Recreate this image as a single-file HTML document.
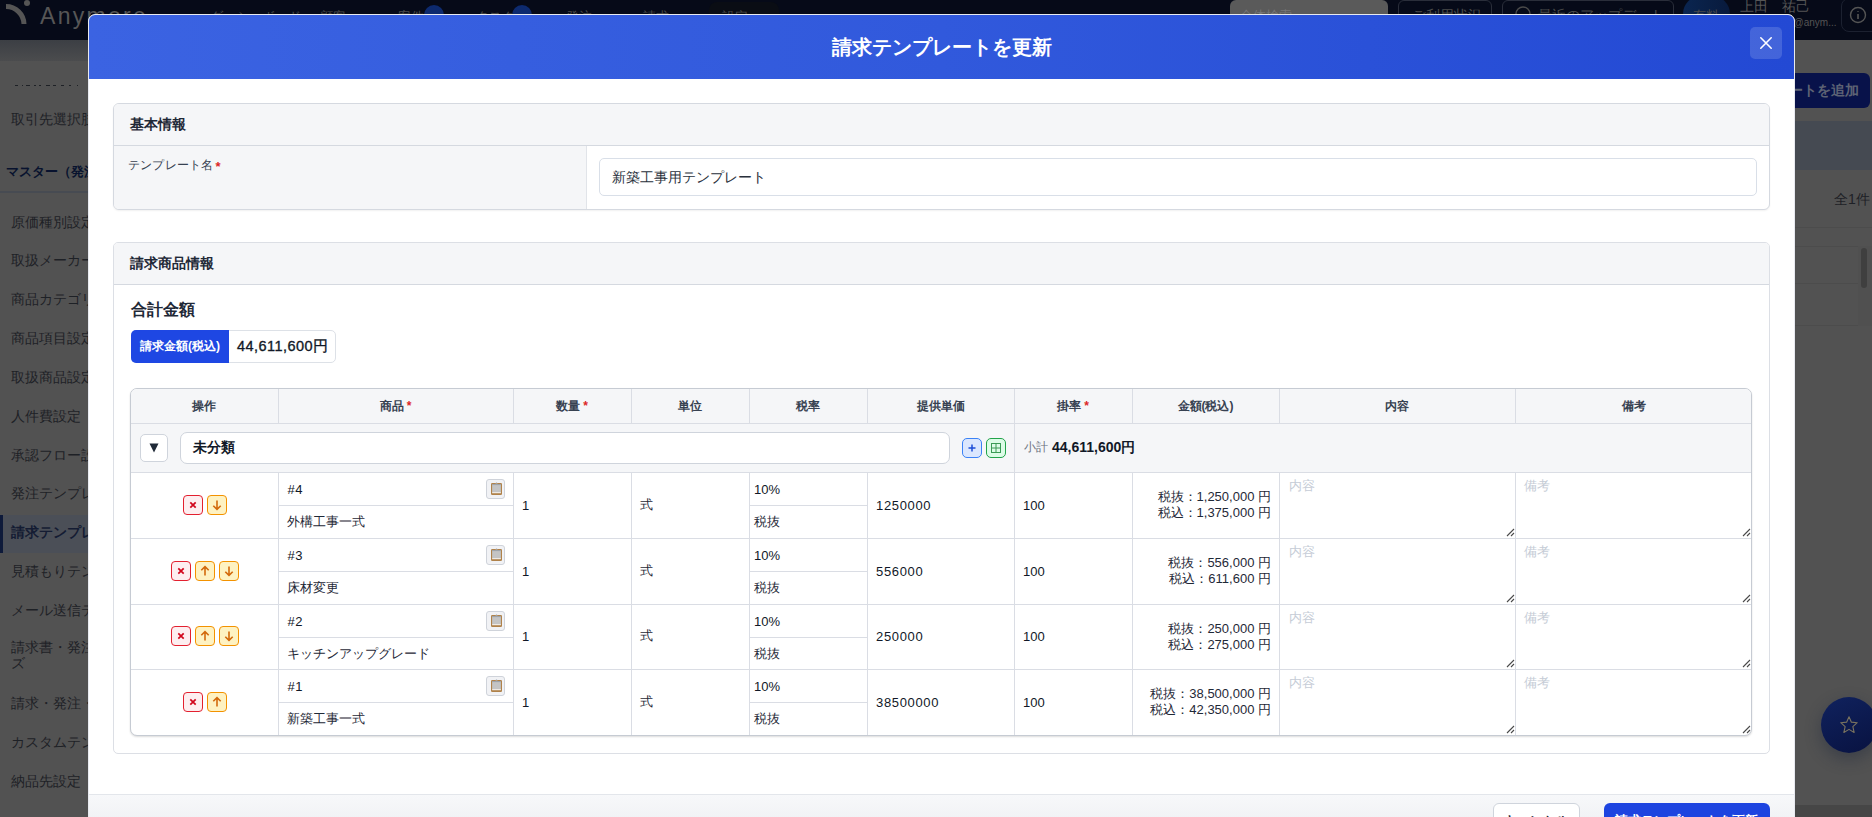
<!DOCTYPE html><html lang="ja"><head><meta charset="utf-8"><title>請求テンプレートを更新</title><style>
html,body{margin:0;padding:0;} body{width:1872px;height:817px;overflow:hidden;position:relative;background:#525252;font-family:"Liberation Sans", sans-serif;}
div{box-sizing:border-box;}
</style></head><body>
<div style="position:absolute;left:0px;top:0px;width:1872px;height:40px;background:#060a18;"></div>
<svg style="position:absolute;left:0;top:0" width="40" height="40" viewBox="0 0 40 40"><path d="M6 6.5 A 18 18 0 0 1 24 24" stroke="#555" stroke-width="5" fill="none"/><circle cx="27" cy="3" r="3" fill="#555"/></svg>
<div style="position:absolute;left:40px;top:1.5px;font-size:23px;line-height:29px;color:#565656;font-weight:normal;white-space:nowrap;letter-spacing:2.3px;">Anymore</div>
<div style="position:absolute;left:210px;top:6.5px;font-size:13px;line-height:19px;color:#4a4a4a;font-weight:normal;white-space:nowrap;">ダッシュボード</div>
<div style="position:absolute;left:320px;top:6.5px;font-size:13px;line-height:19px;color:#4a4a4a;font-weight:normal;white-space:nowrap;">顧客</div>
<div style="position:absolute;left:398px;top:6.5px;font-size:13px;line-height:19px;color:#4a4a4a;font-weight:normal;white-space:nowrap;">案件</div>
<div style="position:absolute;left:476px;top:6.5px;font-size:13px;line-height:19px;color:#4a4a4a;font-weight:normal;white-space:nowrap;">タスク</div>
<div style="position:absolute;left:566px;top:6.5px;font-size:13px;line-height:19px;color:#4a4a4a;font-weight:normal;white-space:nowrap;">発注</div>
<div style="position:absolute;left:643px;top:6.5px;font-size:13px;line-height:19px;color:#4a4a4a;font-weight:normal;white-space:nowrap;">請求</div>
<div style="position:absolute;left:722px;top:6.5px;font-size:13px;line-height:19px;color:#4a4a4a;font-weight:normal;white-space:nowrap;">設定</div>
<div style="position:absolute;left:424px;top:5px;width:20px;height:20px;background:#0d2a6e;border-radius:50%;"></div>
<div style="position:absolute;left:512px;top:5px;width:20px;height:20px;background:#0d2a6e;border-radius:50%;"></div>
<div style="position:absolute;left:709px;top:2px;width:70px;height:30px;background:#0a0d14;border-radius:8px;"></div>
<div style="position:absolute;left:722px;top:6.5px;font-size:13px;line-height:19px;color:#4a4a4a;font-weight:normal;white-space:nowrap;">設定</div>
<div style="position:absolute;left:1230px;top:0px;width:158px;height:32px;background:#5a5a5a;border-radius:6px;"></div>
<div style="position:absolute;left:1240px;top:5.5px;font-size:13px;line-height:19px;color:#777;font-weight:normal;white-space:nowrap;">全体検索</div>
<div style="position:absolute;left:1398px;top:0px;width:94px;height:32px;border:1px solid #2a2e3a;border-radius:6px;"></div>
<div style="position:absolute;left:1412px;top:5.0px;font-size:14px;line-height:20px;color:#4a4a4a;font-weight:normal;white-space:nowrap;">ご利用状況</div>
<div style="position:absolute;left:1502px;top:0px;width:172px;height:32px;border:1px solid #2a2e3a;border-radius:6px;"></div>
<div style="position:absolute;left:1538px;top:5.0px;font-size:14px;line-height:20px;color:#4a4a4a;font-weight:normal;white-space:nowrap;">最近のアップデート</div>
<svg style="position:absolute;left:1514px;top:5px" width="18" height="18" viewBox="0 0 18 18"><circle cx="9" cy="9" r="7" fill="none" stroke="#4a4a4a" stroke-width="1.4"/></svg>
<div style="position:absolute;left:1683px;top:-4px;width:47px;height:36px;background:linear-gradient(90deg,#0a2550,#081a3c);border-radius:18px;"></div>
<div style="position:absolute;left:1693px;top:5.5px;font-size:13px;line-height:19px;color:#4a4a4a;font-weight:normal;white-space:nowrap;">有料</div>
<div style="position:absolute;left:1740px;top:-4.0px;font-size:14px;line-height:20px;color:#555;font-weight:normal;white-space:nowrap;">上田　祐己</div>
<div style="position:absolute;left:1788px;top:15.0px;font-size:10px;line-height:16px;color:#555;font-weight:normal;white-space:nowrap;">3@anym...</div>
<div style="position:absolute;left:1841px;top:-2px;width:45px;height:34px;border:1px solid #1c2130;border-radius:8px;"></div>
<svg style="position:absolute;left:1848px;top:5px" width="20" height="20" viewBox="0 0 20 20"><circle cx="10" cy="10" r="7.5" fill="none" stroke="#555" stroke-width="1.4"/><path d="M10 9v5M10 6.2v.8" stroke="#555" stroke-width="1.6"/></svg>
<div style="position:absolute;left:0px;top:40px;width:88px;height:21px;background:linear-gradient(#3c3f44,#4b4c4e);"></div>
<div style="position:absolute;left:15px;top:85px;width:3px;height:1.2px;background:#1e2126;"></div>
<div style="position:absolute;left:22px;top:85px;width:1px;height:1.2px;background:#1e2126;"></div>
<div style="position:absolute;left:26px;top:85px;width:4px;height:1.2px;background:#1e2126;"></div>
<div style="position:absolute;left:34px;top:85px;width:2px;height:1.2px;background:#1e2126;"></div>
<div style="position:absolute;left:39px;top:85px;width:2px;height:1.2px;background:#1e2126;"></div>
<div style="position:absolute;left:46px;top:85px;width:4px;height:1.2px;background:#1e2126;"></div>
<div style="position:absolute;left:53px;top:85px;width:3px;height:1.2px;background:#1e2126;"></div>
<div style="position:absolute;left:61px;top:85px;width:3px;height:1.2px;background:#1e2126;"></div>
<div style="position:absolute;left:69px;top:85px;width:2px;height:1.2px;background:#1e2126;"></div>
<div style="position:absolute;left:77px;top:85px;width:1px;height:1.2px;background:#1e2126;"></div>
<div style="position:absolute;left:11px;top:109.0px;font-size:14px;line-height:20px;color:#1e2126;font-weight:normal;white-space:nowrap;">取引先選択肢</div>
<div style="position:absolute;left:11px;top:212.0px;font-size:14px;line-height:20px;color:#1e2126;font-weight:normal;white-space:nowrap;">原価種別設定</div>
<div style="position:absolute;left:11px;top:250.0px;font-size:14px;line-height:20px;color:#1e2126;font-weight:normal;white-space:nowrap;">取扱メーカー</div>
<div style="position:absolute;left:11px;top:289.0px;font-size:14px;line-height:20px;color:#1e2126;font-weight:normal;white-space:nowrap;">商品カテゴリ</div>
<div style="position:absolute;left:11px;top:328.0px;font-size:14px;line-height:20px;color:#1e2126;font-weight:normal;white-space:nowrap;">商品項目設定</div>
<div style="position:absolute;left:11px;top:367.0px;font-size:14px;line-height:20px;color:#1e2126;font-weight:normal;white-space:nowrap;">取扱商品設定</div>
<div style="position:absolute;left:11px;top:406.0px;font-size:14px;line-height:20px;color:#1e2126;font-weight:normal;white-space:nowrap;">人件費設定</div>
<div style="position:absolute;left:11px;top:445.0px;font-size:14px;line-height:20px;color:#1e2126;font-weight:normal;white-space:nowrap;">承認フロー設定</div>
<div style="position:absolute;left:11px;top:483.0px;font-size:14px;line-height:20px;color:#1e2126;font-weight:normal;white-space:nowrap;">発注テンプレート</div>
<div style="position:absolute;left:11px;top:561.0px;font-size:14px;line-height:20px;color:#1e2126;font-weight:normal;white-space:nowrap;">見積もりテンプレート</div>
<div style="position:absolute;left:11px;top:600.0px;font-size:14px;line-height:20px;color:#1e2126;font-weight:normal;white-space:nowrap;">メール送信テンプレート</div>
<div style="position:absolute;left:11px;top:693.0px;font-size:14px;line-height:20px;color:#1e2126;font-weight:normal;white-space:nowrap;">請求・発注・見積</div>
<div style="position:absolute;left:11px;top:732.0px;font-size:14px;line-height:20px;color:#1e2126;font-weight:normal;white-space:nowrap;">カスタムテンプレート</div>
<div style="position:absolute;left:11px;top:771.0px;font-size:14px;line-height:20px;color:#1e2126;font-weight:normal;white-space:nowrap;">納品先設定</div>
<div style="position:absolute;left:11px;top:637.0px;font-size:14px;line-height:20px;color:#1e2126;font-weight:normal;white-space:nowrap;">請求書・発注書</div>
<div style="position:absolute;left:11px;top:653.0px;font-size:14px;line-height:20px;color:#1e2126;font-weight:normal;white-space:nowrap;">ズ</div>
<div style="position:absolute;left:6px;top:163.25px;font-size:12.5px;line-height:18.5px;color:#08122e;font-weight:bold;white-space:nowrap;">マスター（発注</div>
<div style="position:absolute;left:0px;top:191px;width:88px;height:2px;background:#474b52;"></div>
<div style="position:absolute;left:0px;top:515px;width:88px;height:38px;background:#4b4f57;"></div>
<div style="position:absolute;left:0px;top:515px;width:3px;height:38px;background:#0e1a3a;"></div>
<div style="position:absolute;left:11px;top:522.0px;font-size:14px;line-height:20px;color:#141c33;font-weight:bold;white-space:nowrap;">請求テンプレート</div>
<div style="position:absolute;left:1780px;top:73px;width:90px;height:35px;background:#08124a;border-radius:6px;"></div>
<div style="position:absolute;left:1759px;top:80.0px;font-size:14px;line-height:20px;color:#5d6274;font-weight:bold;white-space:nowrap;width:100px;text-align:right;">ートを追加</div>
<div style="position:absolute;left:1795px;top:121px;width:77px;height:49px;background:#454a52;"></div>
<div style="position:absolute;left:1834px;top:189.0px;font-size:14px;line-height:20px;color:#1e2126;font-weight:normal;white-space:nowrap;">全1件</div>
<div style="position:absolute;left:1795px;top:227px;width:77px;height:1px;background:#4c4c4c;"></div>
<div style="position:absolute;left:1795px;top:246px;width:77px;height:1px;background:#4c4c4c;"></div>
<div style="position:absolute;left:1795px;top:283px;width:77px;height:1px;background:#4c4c4c;"></div>
<div style="position:absolute;left:1795px;top:325px;width:77px;height:1px;background:#4c4c4c;"></div>
<div style="position:absolute;left:1858px;top:246px;width:14px;height:80px;background:#505050;"></div>
<div style="position:absolute;left:1861px;top:248px;width:6px;height:40px;background:#3f3f3f;border-radius:3px;"></div>
<div style="position:absolute;left:1821px;top:697px;width:56px;height:56px;background:linear-gradient(155deg,#10225e,#081240);border-radius:50%;box-shadow:0 6px 16px rgba(30,40,60,.45);"></div>
<svg style="position:absolute;left:1838px;top:714px" width="22" height="22" viewBox="0 0 24 24"><path d="M12 3l2.6 5.9 6.4.6-4.8 4.3 1.4 6.3L12 16.8 6.4 20.1l1.4-6.3L3 9.5l6.4-.6z" fill="none" stroke="#7a735f" stroke-width="1.2" stroke-linejoin="round"/></svg>
<div style="position:absolute;left:1795px;top:805px;width:77px;height:12px;background:#464646;"></div>
<div style="position:absolute;left:88px;top:14px;width:1707px;height:820px;background:#fff;border:1px solid #e8eaf0;border-radius:7px;"></div>
<div style="position:absolute;left:89px;top:15px;width:1705px;height:64px;background:linear-gradient(90deg,#3b63e2 0%,#3159dc 50%,#2349d4 100%);border-radius:6px 6px 0 0;"></div>
<div style="position:absolute;left:89px;top:33.0px;font-size:20px;line-height:28px;color:#fff;font-weight:bold;white-space:nowrap;width:1705px;text-align:center;">請求テンプレートを更新</div>
<div style="position:absolute;left:1750px;top:27px;width:32px;height:32px;background:rgba(255,255,255,.15);border-radius:5px;"></div>
<svg style="position:absolute;left:1750px;top:27px" width="32" height="32" viewBox="0 0 32 32"><path d="M10.8 10.8L21.2 21.2M21.2 10.8L10.8 21.2" stroke="#fff" stroke-width="1.6" stroke-linecap="round"/></svg>
<div style="position:absolute;left:89px;top:794px;width:1705px;height:30px;background:linear-gradient(#f7f8fa,#f0f1f4);border-top:1px solid #e3e6eb;"></div>
<div style="position:absolute;left:1493px;top:803px;width:87px;height:30px;background:#fff;border:1px solid #cfd4dc;border-radius:6px;"></div>
<div style="position:absolute;left:1504px;top:810.5px;font-size:13px;line-height:19px;color:#1f2937;font-weight:bold;white-space:nowrap;">キャンセル</div>
<div style="position:absolute;left:1604px;top:803px;width:166px;height:30px;background:#1d44e0;border-radius:6px;"></div>
<div style="position:absolute;left:1615px;top:810.5px;font-size:13px;line-height:19px;color:#fff;font-weight:bold;white-space:nowrap;">請求テンプレートを更新</div>
<div style="position:absolute;left:113px;top:103px;width:1657px;height:107px;background:#fff;border:1px solid #d5d9e0;border-radius:6px;box-shadow:0 1px 2px rgba(0,0,0,.06);"></div>
<div style="position:absolute;left:114px;top:104px;width:1655px;height:41px;background:#f5f6f8;border-radius:5px 5px 0 0;"></div>
<div style="position:absolute;left:114px;top:145px;width:1655px;height:1px;background:#d5d9e0;"></div>
<div style="position:absolute;left:130px;top:114.0px;font-size:14px;line-height:20px;color:#1f2937;font-weight:bold;white-space:nowrap;">基本情報</div>
<div style="position:absolute;left:114px;top:146px;width:472px;height:63px;background:#f5f6f8;border-radius:0 0 0 5px;"></div>
<div style="position:absolute;left:586px;top:146px;width:1px;height:63px;background:#e1e4e9;"></div>
<div style="position:absolute;left:128px;top:156.0px;font-size:12px;line-height:18px;color:#374151;font-weight:normal;white-space:nowrap;letter-spacing:0.2px;">テンプレート名</div>
<div style="position:absolute;left:215.5px;top:156.5px;font-size:13px;line-height:19px;color:#dc2626;font-weight:bold;white-space:nowrap;">*</div>
<div style="position:absolute;left:599px;top:158px;width:1158px;height:38px;background:#fff;border:1px solid #d9dfe8;border-radius:5px;"></div>
<div style="position:absolute;left:612px;top:167.0px;font-size:14px;line-height:20px;color:#2a313c;font-weight:normal;white-space:nowrap;">新築工事用テンプレート</div>
<div style="position:absolute;left:113px;top:242px;width:1657px;height:512px;background:#fff;border:1px solid #dcdfe5;border-radius:5px;"></div>
<div style="position:absolute;left:114px;top:243px;width:1655px;height:41px;background:#f5f6f8;border-radius:4px 4px 0 0;"></div>
<div style="position:absolute;left:114px;top:284px;width:1655px;height:1px;background:#d5d9e0;"></div>
<div style="position:absolute;left:130px;top:253.0px;font-size:14px;line-height:20px;color:#1f2937;font-weight:bold;white-space:nowrap;">請求商品情報</div>
<div style="position:absolute;left:130.5px;top:299.0px;font-size:16px;line-height:22px;color:#1f2937;font-weight:bold;white-space:nowrap;">合計金額</div>
<div style="position:absolute;left:131px;top:330px;width:205px;height:33px;background:#fff;border:1px solid #dde1e7;border-radius:5px;"></div>
<div style="position:absolute;left:131px;top:330px;width:98px;height:33px;background:#1e47e3;border-radius:5px 0 0 5px;"></div>
<div style="position:absolute;left:131px;top:337.0px;font-size:12px;line-height:18px;color:#fff;font-weight:bold;white-space:nowrap;width:98px;text-align:center;">請求金額(税込)</div>
<div style="position:absolute;left:237px;top:335.75px;font-size:14.5px;line-height:20.5px;color:#111827;font-weight:normal;white-space:nowrap;letter-spacing:0.45px;-webkit-text-stroke:0.35px #111827;">44,611,600円</div>
<div style="position:absolute;left:130px;top:388px;width:1622px;height:348px;background:#fff;border:1px solid #c6cbd3;border-radius:7px;box-shadow:0 1px 2px rgba(0,0,0,.14);"></div>
<div style="position:absolute;left:131px;top:389px;width:1620px;height:34px;background:#f5f6f8;border-radius:6px 6px 0 0;"></div>
<div style="position:absolute;left:131px;top:424px;width:1620px;height:48px;background:#f5f6f8;"></div>
<div style="position:absolute;left:131px;top:423px;width:1620px;height:1px;background:#dadde4;"></div>
<div style="position:absolute;left:131px;top:472px;width:1620px;height:1px;background:#dadde4;"></div>
<div style="position:absolute;left:131px;top:538px;width:1620px;height:1px;background:#dadde4;"></div>
<div style="position:absolute;left:131px;top:604px;width:1620px;height:1px;background:#dadde4;"></div>
<div style="position:absolute;left:131px;top:669px;width:1620px;height:1px;background:#dadde4;"></div>
<div style="position:absolute;left:278px;top:389px;width:1px;height:34px;background:#dadde4;"></div>
<div style="position:absolute;left:513px;top:389px;width:1px;height:34px;background:#dadde4;"></div>
<div style="position:absolute;left:631px;top:389px;width:1px;height:34px;background:#dadde4;"></div>
<div style="position:absolute;left:749px;top:389px;width:1px;height:34px;background:#dadde4;"></div>
<div style="position:absolute;left:867px;top:389px;width:1px;height:34px;background:#dadde4;"></div>
<div style="position:absolute;left:1014px;top:389px;width:1px;height:34px;background:#dadde4;"></div>
<div style="position:absolute;left:1132px;top:389px;width:1px;height:34px;background:#dadde4;"></div>
<div style="position:absolute;left:1279px;top:389px;width:1px;height:34px;background:#dadde4;"></div>
<div style="position:absolute;left:1515px;top:389px;width:1px;height:34px;background:#dadde4;"></div>
<div style="position:absolute;left:1014px;top:424px;width:1px;height:48px;background:#dadde4;"></div>
<div style="position:absolute;left:278px;top:473px;width:1px;height:262px;background:#dadde4;"></div>
<div style="position:absolute;left:513px;top:473px;width:1px;height:262px;background:#dadde4;"></div>
<div style="position:absolute;left:631px;top:473px;width:1px;height:262px;background:#dadde4;"></div>
<div style="position:absolute;left:749px;top:473px;width:1px;height:262px;background:#dadde4;"></div>
<div style="position:absolute;left:867px;top:473px;width:1px;height:262px;background:#dadde4;"></div>
<div style="position:absolute;left:1014px;top:473px;width:1px;height:262px;background:#dadde4;"></div>
<div style="position:absolute;left:1132px;top:473px;width:1px;height:262px;background:#dadde4;"></div>
<div style="position:absolute;left:1279px;top:473px;width:1px;height:262px;background:#dadde4;"></div>
<div style="position:absolute;left:1515px;top:473px;width:1px;height:262px;background:#dadde4;"></div>
<div style="position:absolute;left:130px;top:397.0px;font-size:12px;line-height:18px;color:#374151;font-weight:bold;white-space:nowrap;width:148px;text-align:center;">操作</div>
<div style="position:absolute;left:278px;top:397.0px;font-size:12px;line-height:18px;color:#374151;font-weight:bold;white-space:nowrap;width:235px;text-align:center;">商品<span style="color:#dc2626;margin-left:3px">*</span></div>
<div style="position:absolute;left:513px;top:397.0px;font-size:12px;line-height:18px;color:#374151;font-weight:bold;white-space:nowrap;width:118px;text-align:center;">数量<span style="color:#dc2626;margin-left:3px">*</span></div>
<div style="position:absolute;left:631px;top:397.0px;font-size:12px;line-height:18px;color:#374151;font-weight:bold;white-space:nowrap;width:118px;text-align:center;">単位</div>
<div style="position:absolute;left:749px;top:397.0px;font-size:12px;line-height:18px;color:#374151;font-weight:bold;white-space:nowrap;width:118px;text-align:center;">税率</div>
<div style="position:absolute;left:867px;top:397.0px;font-size:12px;line-height:18px;color:#374151;font-weight:bold;white-space:nowrap;width:147px;text-align:center;">提供単価</div>
<div style="position:absolute;left:1014px;top:397.0px;font-size:12px;line-height:18px;color:#374151;font-weight:bold;white-space:nowrap;width:118px;text-align:center;">掛率<span style="color:#dc2626;margin-left:3px">*</span></div>
<div style="position:absolute;left:1132px;top:397.0px;font-size:12px;line-height:18px;color:#374151;font-weight:bold;white-space:nowrap;width:147px;text-align:center;">金額(税込)</div>
<div style="position:absolute;left:1279px;top:397.0px;font-size:12px;line-height:18px;color:#374151;font-weight:bold;white-space:nowrap;width:236px;text-align:center;">内容</div>
<div style="position:absolute;left:1515px;top:397.0px;font-size:12px;line-height:18px;color:#374151;font-weight:bold;white-space:nowrap;width:237px;text-align:center;">備考</div>
<div style="position:absolute;left:140px;top:434px;width:28px;height:28px;background:#fff;border:1px solid #cfd4dc;border-radius:5px;"></div>
<svg style="position:absolute;left:140px;top:434px" width="28" height="28" viewBox="0 0 28 28"><path d="M9.5 9.5h9l-4.5 9z" fill="#1f2937"/></svg>
<div style="position:absolute;left:180px;top:432px;width:770px;height:32px;background:#fff;border:1px solid #cfd4dc;border-radius:7px;"></div>
<div style="position:absolute;left:193px;top:437.0px;font-size:14px;line-height:20px;color:#111827;font-weight:bold;white-space:nowrap;">未分類</div>
<div style="position:absolute;left:962px;top:438px;width:20px;height:20px;background:#dbe7fe;border:1px solid #3b82f6;border-radius:5px;"></div>
<svg style="position:absolute;left:962px;top:438px" width="20" height="20" viewBox="0 0 20 20"><path d="M10 6.5v7M6.5 10h7" stroke="#1d4ed8" stroke-width="1.5"/></svg>
<div style="position:absolute;left:986px;top:438px;width:20px;height:20px;background:#dcfce7;border:1px solid #22a34a;border-radius:5px;"></div>
<svg style="position:absolute;left:986px;top:438px" width="20" height="20" viewBox="0 0 20 20"><rect x="5.5" y="5.5" width="9" height="9" fill="none" stroke="#3a9a55" stroke-width="1"/><path d="M10 5.5v9M5.5 10h9" stroke="#3a9a55" stroke-width="1"/></svg>
<div style="position:absolute;left:1024px;top:438.0px;font-size:12px;line-height:18px;color:#6b7280;font-weight:normal;white-space:nowrap;">小計</div>
<div style="position:absolute;left:1052px;top:437.0px;font-size:14px;line-height:20px;color:#111827;font-weight:bold;white-space:nowrap;">44,611,600円</div>
<div style="position:absolute;left:183px;top:495px;width:20px;height:20px;background:#fdeef0;border:1px solid #e3202f;border-radius:4px;"></div>
<svg style="position:absolute;left:183px;top:495px" width="20" height="20" viewBox="0 0 20 20"><path d="M7.3 7.3l5.4 5.4M12.7 7.3l-5.4 5.4" stroke="#d1061c" stroke-width="1.7"/></svg>
<div style="position:absolute;left:207px;top:495px;width:20px;height:20px;background:#fef2c2;border:1px solid #f39200;border-radius:4px;"></div>
<svg style="position:absolute;left:207px;top:495px" width="20" height="20" viewBox="0 0 20 20"><path d="M10 5.5v8.7M6.3 10.7L10 14.4l3.7-3.7" stroke="#d3690c" stroke-width="1.6" fill="none"/></svg>
<div style="position:absolute;left:279px;top:505px;width:234px;height:1px;background:#dadde4;"></div>
<div style="position:absolute;left:287.5px;top:479.5px;font-size:13px;line-height:19px;color:#111827;font-weight:normal;white-space:nowrap;letter-spacing:0.6px;">#4</div>
<div style="position:absolute;left:486px;top:479px;width:19px;height:20px;background:#f1f2f5;border:1px solid #cfd3da;border-radius:3px;"></div>
<svg style="position:absolute;left:490px;top:481px" width="13" height="15" viewBox="0 0 13 15"><rect x="1" y="2" width="11" height="12" rx="1.3" fill="#b0824a"/><rect x="2.1" y="3.1" width="8.8" height="8" fill="#c4c4c4"/><rect x="2.1" y="3.1" width="8.8" height="1" fill="#9aa0a8"/><rect x="2.1" y="11.1" width="8.8" height="1.1" fill="#f4f4f4"/><path d="M5.3 2.6L6.5 0.9L7.7 2.6z" fill="#b7c0cc"/></svg>
<div style="position:absolute;left:287px;top:511.5px;font-size:13px;line-height:19px;color:#1f2937;font-weight:normal;white-space:nowrap;">外構工事一式</div>
<div style="position:absolute;left:522px;top:495.5px;font-size:13px;line-height:19px;color:#111827;font-weight:normal;white-space:nowrap;">1</div>
<div style="position:absolute;left:640px;top:494.5px;font-size:13px;line-height:19px;color:#1f2937;font-weight:normal;white-space:nowrap;">式</div>
<div style="position:absolute;left:750px;top:505px;width:117px;height:1px;background:#dadde4;"></div>
<div style="position:absolute;left:754px;top:479.5px;font-size:13px;line-height:19px;color:#111827;font-weight:normal;white-space:nowrap;">10%</div>
<div style="position:absolute;left:754px;top:511.5px;font-size:13px;line-height:19px;color:#1f2937;font-weight:normal;white-space:nowrap;">税抜</div>
<div style="position:absolute;left:876px;top:495.5px;font-size:13px;line-height:19px;color:#111827;font-weight:normal;white-space:nowrap;letter-spacing:0.65px;">1250000</div>
<div style="position:absolute;left:1023px;top:495.5px;font-size:13px;line-height:19px;color:#111827;font-weight:normal;white-space:nowrap;">100</div>
<div style="position:absolute;left:1133px;top:489.0px;font-size:13px;line-height:16px;color:#1f2937;font-weight:normal;white-space:nowrap;width:138px;text-align:right;">税抜：1,250,000 円</div>
<div style="position:absolute;left:1133px;top:505.0px;font-size:13px;line-height:16px;color:#1f2937;font-weight:normal;white-space:nowrap;width:138px;text-align:right;">税込：1,375,000 円</div>
<div style="position:absolute;left:1289px;top:475.5px;font-size:13px;line-height:19px;color:#c5ccd6;font-weight:normal;white-space:nowrap;">内容</div>
<div style="position:absolute;left:1524px;top:475.5px;font-size:13px;line-height:19px;color:#c5ccd6;font-weight:normal;white-space:nowrap;">備考</div>
<svg style="position:absolute;left:1506px;top:528px" width="9" height="9" viewBox="0 0 9 9"><path d="M1 8L8 1M5 8L8 5" stroke="#4a4a4a" stroke-width="1.1"/></svg>
<svg style="position:absolute;left:1742px;top:528px" width="9" height="9" viewBox="0 0 9 9"><path d="M1 8L8 1M5 8L8 5" stroke="#4a4a4a" stroke-width="1.1"/></svg>
<div style="position:absolute;left:171px;top:561px;width:20px;height:20px;background:#fdeef0;border:1px solid #e3202f;border-radius:4px;"></div>
<svg style="position:absolute;left:171px;top:561px" width="20" height="20" viewBox="0 0 20 20"><path d="M7.3 7.3l5.4 5.4M12.7 7.3l-5.4 5.4" stroke="#d1061c" stroke-width="1.7"/></svg>
<div style="position:absolute;left:195px;top:561px;width:20px;height:20px;background:#fef2c2;border:1px solid #f39200;border-radius:4px;"></div>
<svg style="position:absolute;left:195px;top:561px" width="20" height="20" viewBox="0 0 20 20"><path d="M10 14.5V5.8M6.3 9.3L10 5.6l3.7 3.7" stroke="#d3690c" stroke-width="1.6" fill="none"/></svg>
<div style="position:absolute;left:219px;top:561px;width:20px;height:20px;background:#fef2c2;border:1px solid #f39200;border-radius:4px;"></div>
<svg style="position:absolute;left:219px;top:561px" width="20" height="20" viewBox="0 0 20 20"><path d="M10 5.5v8.7M6.3 10.7L10 14.4l3.7-3.7" stroke="#d3690c" stroke-width="1.6" fill="none"/></svg>
<div style="position:absolute;left:279px;top:571px;width:234px;height:1px;background:#dadde4;"></div>
<div style="position:absolute;left:287.5px;top:545.5px;font-size:13px;line-height:19px;color:#111827;font-weight:normal;white-space:nowrap;letter-spacing:0.6px;">#3</div>
<div style="position:absolute;left:486px;top:545px;width:19px;height:20px;background:#f1f2f5;border:1px solid #cfd3da;border-radius:3px;"></div>
<svg style="position:absolute;left:490px;top:547px" width="13" height="15" viewBox="0 0 13 15"><rect x="1" y="2" width="11" height="12" rx="1.3" fill="#b0824a"/><rect x="2.1" y="3.1" width="8.8" height="8" fill="#c4c4c4"/><rect x="2.1" y="3.1" width="8.8" height="1" fill="#9aa0a8"/><rect x="2.1" y="11.1" width="8.8" height="1.1" fill="#f4f4f4"/><path d="M5.3 2.6L6.5 0.9L7.7 2.6z" fill="#b7c0cc"/></svg>
<div style="position:absolute;left:287px;top:577.5px;font-size:13px;line-height:19px;color:#1f2937;font-weight:normal;white-space:nowrap;">床材変更</div>
<div style="position:absolute;left:522px;top:561.5px;font-size:13px;line-height:19px;color:#111827;font-weight:normal;white-space:nowrap;">1</div>
<div style="position:absolute;left:640px;top:560.5px;font-size:13px;line-height:19px;color:#1f2937;font-weight:normal;white-space:nowrap;">式</div>
<div style="position:absolute;left:750px;top:571px;width:117px;height:1px;background:#dadde4;"></div>
<div style="position:absolute;left:754px;top:545.5px;font-size:13px;line-height:19px;color:#111827;font-weight:normal;white-space:nowrap;">10%</div>
<div style="position:absolute;left:754px;top:577.5px;font-size:13px;line-height:19px;color:#1f2937;font-weight:normal;white-space:nowrap;">税抜</div>
<div style="position:absolute;left:876px;top:561.5px;font-size:13px;line-height:19px;color:#111827;font-weight:normal;white-space:nowrap;letter-spacing:0.65px;">556000</div>
<div style="position:absolute;left:1023px;top:561.5px;font-size:13px;line-height:19px;color:#111827;font-weight:normal;white-space:nowrap;">100</div>
<div style="position:absolute;left:1133px;top:555.0px;font-size:13px;line-height:16px;color:#1f2937;font-weight:normal;white-space:nowrap;width:138px;text-align:right;">税抜：556,000 円</div>
<div style="position:absolute;left:1133px;top:571.0px;font-size:13px;line-height:16px;color:#1f2937;font-weight:normal;white-space:nowrap;width:138px;text-align:right;">税込：611,600 円</div>
<div style="position:absolute;left:1289px;top:541.5px;font-size:13px;line-height:19px;color:#c5ccd6;font-weight:normal;white-space:nowrap;">内容</div>
<div style="position:absolute;left:1524px;top:541.5px;font-size:13px;line-height:19px;color:#c5ccd6;font-weight:normal;white-space:nowrap;">備考</div>
<svg style="position:absolute;left:1506px;top:594px" width="9" height="9" viewBox="0 0 9 9"><path d="M1 8L8 1M5 8L8 5" stroke="#4a4a4a" stroke-width="1.1"/></svg>
<svg style="position:absolute;left:1742px;top:594px" width="9" height="9" viewBox="0 0 9 9"><path d="M1 8L8 1M5 8L8 5" stroke="#4a4a4a" stroke-width="1.1"/></svg>
<div style="position:absolute;left:171px;top:626px;width:20px;height:20px;background:#fdeef0;border:1px solid #e3202f;border-radius:4px;"></div>
<svg style="position:absolute;left:171px;top:626px" width="20" height="20" viewBox="0 0 20 20"><path d="M7.3 7.3l5.4 5.4M12.7 7.3l-5.4 5.4" stroke="#d1061c" stroke-width="1.7"/></svg>
<div style="position:absolute;left:195px;top:626px;width:20px;height:20px;background:#fef2c2;border:1px solid #f39200;border-radius:4px;"></div>
<svg style="position:absolute;left:195px;top:626px" width="20" height="20" viewBox="0 0 20 20"><path d="M10 14.5V5.8M6.3 9.3L10 5.6l3.7 3.7" stroke="#d3690c" stroke-width="1.6" fill="none"/></svg>
<div style="position:absolute;left:219px;top:626px;width:20px;height:20px;background:#fef2c2;border:1px solid #f39200;border-radius:4px;"></div>
<svg style="position:absolute;left:219px;top:626px" width="20" height="20" viewBox="0 0 20 20"><path d="M10 5.5v8.7M6.3 10.7L10 14.4l3.7-3.7" stroke="#d3690c" stroke-width="1.6" fill="none"/></svg>
<div style="position:absolute;left:279px;top:637px;width:234px;height:1px;background:#dadde4;"></div>
<div style="position:absolute;left:287.5px;top:611.5px;font-size:13px;line-height:19px;color:#111827;font-weight:normal;white-space:nowrap;letter-spacing:0.6px;">#2</div>
<div style="position:absolute;left:486px;top:611px;width:19px;height:20px;background:#f1f2f5;border:1px solid #cfd3da;border-radius:3px;"></div>
<svg style="position:absolute;left:490px;top:613px" width="13" height="15" viewBox="0 0 13 15"><rect x="1" y="2" width="11" height="12" rx="1.3" fill="#b0824a"/><rect x="2.1" y="3.1" width="8.8" height="8" fill="#c4c4c4"/><rect x="2.1" y="3.1" width="8.8" height="1" fill="#9aa0a8"/><rect x="2.1" y="11.1" width="8.8" height="1.1" fill="#f4f4f4"/><path d="M5.3 2.6L6.5 0.9L7.7 2.6z" fill="#b7c0cc"/></svg>
<div style="position:absolute;left:287px;top:643.5px;font-size:13px;line-height:19px;color:#1f2937;font-weight:normal;white-space:nowrap;">キッチンアップグレード</div>
<div style="position:absolute;left:522px;top:627.0px;font-size:13px;line-height:19px;color:#111827;font-weight:normal;white-space:nowrap;">1</div>
<div style="position:absolute;left:640px;top:626.0px;font-size:13px;line-height:19px;color:#1f2937;font-weight:normal;white-space:nowrap;">式</div>
<div style="position:absolute;left:750px;top:637px;width:117px;height:1px;background:#dadde4;"></div>
<div style="position:absolute;left:754px;top:611.5px;font-size:13px;line-height:19px;color:#111827;font-weight:normal;white-space:nowrap;">10%</div>
<div style="position:absolute;left:754px;top:643.5px;font-size:13px;line-height:19px;color:#1f2937;font-weight:normal;white-space:nowrap;">税抜</div>
<div style="position:absolute;left:876px;top:627.0px;font-size:13px;line-height:19px;color:#111827;font-weight:normal;white-space:nowrap;letter-spacing:0.65px;">250000</div>
<div style="position:absolute;left:1023px;top:627.0px;font-size:13px;line-height:19px;color:#111827;font-weight:normal;white-space:nowrap;">100</div>
<div style="position:absolute;left:1133px;top:620.5px;font-size:13px;line-height:16px;color:#1f2937;font-weight:normal;white-space:nowrap;width:138px;text-align:right;">税抜：250,000 円</div>
<div style="position:absolute;left:1133px;top:636.5px;font-size:13px;line-height:16px;color:#1f2937;font-weight:normal;white-space:nowrap;width:138px;text-align:right;">税込：275,000 円</div>
<div style="position:absolute;left:1289px;top:607.5px;font-size:13px;line-height:19px;color:#c5ccd6;font-weight:normal;white-space:nowrap;">内容</div>
<div style="position:absolute;left:1524px;top:607.5px;font-size:13px;line-height:19px;color:#c5ccd6;font-weight:normal;white-space:nowrap;">備考</div>
<svg style="position:absolute;left:1506px;top:659px" width="9" height="9" viewBox="0 0 9 9"><path d="M1 8L8 1M5 8L8 5" stroke="#4a4a4a" stroke-width="1.1"/></svg>
<svg style="position:absolute;left:1742px;top:659px" width="9" height="9" viewBox="0 0 9 9"><path d="M1 8L8 1M5 8L8 5" stroke="#4a4a4a" stroke-width="1.1"/></svg>
<div style="position:absolute;left:183px;top:692px;width:20px;height:20px;background:#fdeef0;border:1px solid #e3202f;border-radius:4px;"></div>
<svg style="position:absolute;left:183px;top:692px" width="20" height="20" viewBox="0 0 20 20"><path d="M7.3 7.3l5.4 5.4M12.7 7.3l-5.4 5.4" stroke="#d1061c" stroke-width="1.7"/></svg>
<div style="position:absolute;left:207px;top:692px;width:20px;height:20px;background:#fef2c2;border:1px solid #f39200;border-radius:4px;"></div>
<svg style="position:absolute;left:207px;top:692px" width="20" height="20" viewBox="0 0 20 20"><path d="M10 14.5V5.8M6.3 9.3L10 5.6l3.7 3.7" stroke="#d3690c" stroke-width="1.6" fill="none"/></svg>
<div style="position:absolute;left:279px;top:702px;width:234px;height:1px;background:#dadde4;"></div>
<div style="position:absolute;left:287.5px;top:676.5px;font-size:13px;line-height:19px;color:#111827;font-weight:normal;white-space:nowrap;letter-spacing:0.6px;">#1</div>
<div style="position:absolute;left:486px;top:676px;width:19px;height:20px;background:#f1f2f5;border:1px solid #cfd3da;border-radius:3px;"></div>
<svg style="position:absolute;left:490px;top:678px" width="13" height="15" viewBox="0 0 13 15"><rect x="1" y="2" width="11" height="12" rx="1.3" fill="#b0824a"/><rect x="2.1" y="3.1" width="8.8" height="8" fill="#c4c4c4"/><rect x="2.1" y="3.1" width="8.8" height="1" fill="#9aa0a8"/><rect x="2.1" y="11.1" width="8.8" height="1.1" fill="#f4f4f4"/><path d="M5.3 2.6L6.5 0.9L7.7 2.6z" fill="#b7c0cc"/></svg>
<div style="position:absolute;left:287px;top:708.5px;font-size:13px;line-height:19px;color:#1f2937;font-weight:normal;white-space:nowrap;">新築工事一式</div>
<div style="position:absolute;left:522px;top:692.5px;font-size:13px;line-height:19px;color:#111827;font-weight:normal;white-space:nowrap;">1</div>
<div style="position:absolute;left:640px;top:691.5px;font-size:13px;line-height:19px;color:#1f2937;font-weight:normal;white-space:nowrap;">式</div>
<div style="position:absolute;left:750px;top:702px;width:117px;height:1px;background:#dadde4;"></div>
<div style="position:absolute;left:754px;top:676.5px;font-size:13px;line-height:19px;color:#111827;font-weight:normal;white-space:nowrap;">10%</div>
<div style="position:absolute;left:754px;top:708.5px;font-size:13px;line-height:19px;color:#1f2937;font-weight:normal;white-space:nowrap;">税抜</div>
<div style="position:absolute;left:876px;top:692.5px;font-size:13px;line-height:19px;color:#111827;font-weight:normal;white-space:nowrap;letter-spacing:0.65px;">38500000</div>
<div style="position:absolute;left:1023px;top:692.5px;font-size:13px;line-height:19px;color:#111827;font-weight:normal;white-space:nowrap;">100</div>
<div style="position:absolute;left:1133px;top:686.0px;font-size:13px;line-height:16px;color:#1f2937;font-weight:normal;white-space:nowrap;width:138px;text-align:right;">税抜：38,500,000 円</div>
<div style="position:absolute;left:1133px;top:702.0px;font-size:13px;line-height:16px;color:#1f2937;font-weight:normal;white-space:nowrap;width:138px;text-align:right;">税込：42,350,000 円</div>
<div style="position:absolute;left:1289px;top:672.5px;font-size:13px;line-height:19px;color:#c5ccd6;font-weight:normal;white-space:nowrap;">内容</div>
<div style="position:absolute;left:1524px;top:672.5px;font-size:13px;line-height:19px;color:#c5ccd6;font-weight:normal;white-space:nowrap;">備考</div>
<svg style="position:absolute;left:1506px;top:725px" width="9" height="9" viewBox="0 0 9 9"><path d="M1 8L8 1M5 8L8 5" stroke="#4a4a4a" stroke-width="1.1"/></svg>
<svg style="position:absolute;left:1742px;top:725px" width="9" height="9" viewBox="0 0 9 9"><path d="M1 8L8 1M5 8L8 5" stroke="#4a4a4a" stroke-width="1.1"/></svg>
</body></html>
